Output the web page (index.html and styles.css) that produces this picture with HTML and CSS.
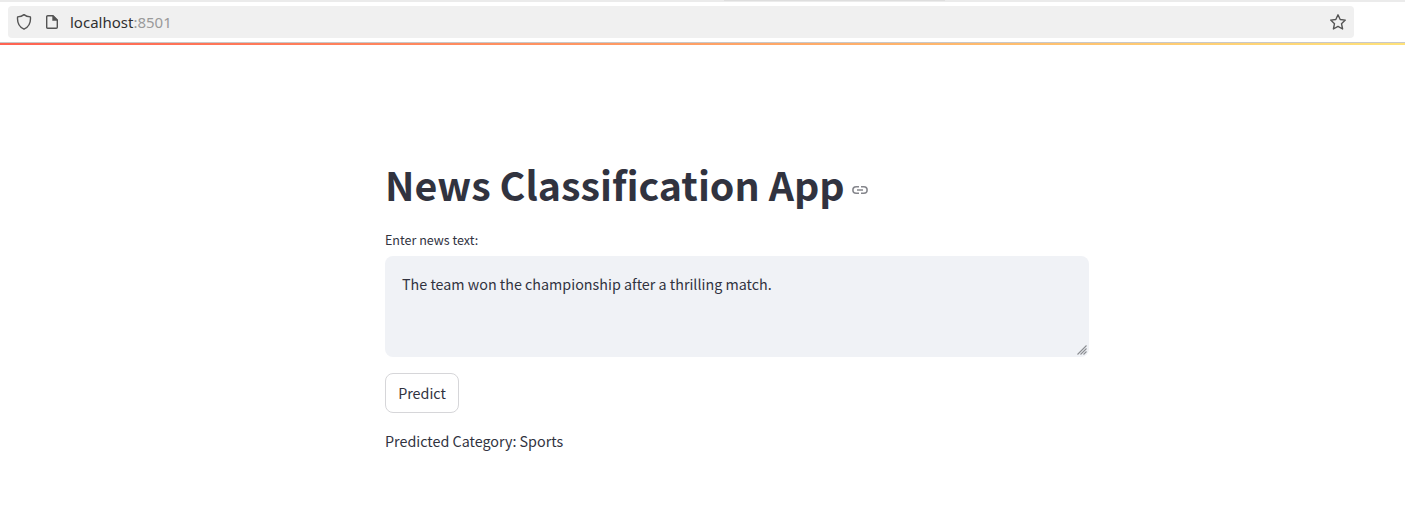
FILE: index.html
```html
<!DOCTYPE html>
<html lang="en">
<head>
<meta charset="utf-8">
<title>News Classification App</title>
<link rel="stylesheet" href="styles.css">
</head>
<body>
<header class="toolbar">
  <div class="tab-edge"></div>
  <div class="address">
    <svg class="shield" width="16" height="18" viewBox="0 0 16 18"><path d="M8 1.6C9.700 3 12 3.700 14.400 3.900C14.900 9 13.400 13.800 8 16.200C2.600 13.800 1.100 9 1.600 3.900C4 3.700 6.300 3 8 1.600Z"/></svg>
    <svg class="page-icon" width="14" height="16" viewBox="0 0 14 16"><path d="M2.700 1.700H8L12.300 6V13.300Q12.300 14.300 11.300 14.300H2.700Q1.700 14.300 1.700 13.300V2.700Q1.700 1.700 2.700 1.700Z"/><path class="fold" d="M7.300 1.500V6.700H12.500V5.700L8.400 1.500Z"/></svg>
    <span class="url">localhost<span class="port">:8501</span></span>
    <svg class="star" width="18" height="18" viewBox="0 0 18 18"><path d="M9 1.800L11.200 6.500L16.300 7.100L12.500 10.700L13.600 16L9 13.400L4.400 16L5.500 10.700L1.700 7.100L6.800 6.500Z"/></svg>
  </div>
</header>
<div class="decoration"></div>
<main class="content">
  <h1 class="title"><span>News Classification App</span>
    <svg class="link" width="16" height="10" viewBox="0 0 16 10"><path d="M7 1.700H4.200A3.300 3.300 0 0 0 4.200 8.300H7M9 1.700H11.800A3.300 3.300 0 0 1 11.800 8.300H9M5 5H11"/></svg>
  </h1>
  <label class="label" for="news">Enter news text:</label>
  <div class="field">
    <textarea id="news" class="input" spellcheck="false">The team won the championship after a thrilling match.</textarea>
    <svg class="grip" width="10" height="10" viewBox="0 0 10 10"><path d="M.5 9.500L9.500 .5M3.500 9.500L9.500 3.500M6.500 9.500L9.500 6.500"/></svg>
  </div>
  <button class="predict">Predict</button>
  <p class="result">Predicted Category: Sports</p>
</main>
</body>
</html>
```
FILE: styles.css
```css
* { box-sizing: border-box; }
body {
  margin: 0;
  height: 532px;
  overflow: hidden;
  background: #fff;
  color: #31333f;
  font-family: "Noto Sans CJK SC", "Noto Sans", sans-serif;
}
.toolbar { height: 43px; border-bottom: 1px solid #c8c8c9; }
.tab-edge {
  height: 2px;
  background: linear-gradient(#dedede, #dedede) 724px 0 / 221px 1px no-repeat #ebebeb;
}
.address {
  display: flex;
  align-items: center;
  width: 1346px;
  height: 32px;
  margin: 4px 0 0 8px;
  padding: 0 7px 0 8px;
  border-radius: 4px;
  background: #f0f0f0;
}
svg { display: block; flex: none; fill: none; }
.shield, .page-icon, .star { stroke: #545454; stroke-width: 1.4; stroke-linejoin: round; }
.page-icon { margin-left: 13px; }
.page-icon .fold { fill: #545454; stroke: none; }
.star { margin-left: auto; }
.url {
  margin-left: 11px;
  font: 15px/20px "Noto Sans", sans-serif;
  color: #303030;
}
.port { color: #9a9a9a; }
.decoration { height: 2px; background: linear-gradient(90deg, #ff6352, #ffa166 50%, #ffe27a); }
.content { width: 704px; margin: 113px 0 0 385px; }
.title {
  display: flex;
  align-items: center;
  height: 52px;
  margin: 0;
  font-size: 39.36px;
  line-height: 52px;
  font-weight: 700;
  white-space: nowrap;
}
.link { margin: 12px 0 0 7px; stroke: #85868c; stroke-width: 1.6; }
.label { display: block; margin-top: 20px; height: 20px; font-size: 12.53px; line-height: 20px; }
.field { position: relative; height: 101px; margin-top: 6px; }
.input {
  display: block;
  width: 100%;
  height: 101px;
  padding: 16px 17px;
  border: 0;
  border-radius: 8px;
  outline: 0;
  resize: none;
  background: #f0f2f6;
  color: inherit;
  font: 14.32px/24px "Noto Sans CJK SC", sans-serif;
}
.grip { position: absolute; right: 2px; bottom: 2px; stroke: #8c8d92; stroke-width: 1.1; }
.predict {
  display: block;
  width: 74px;
  height: 40px;
  margin-top: 16px;
  padding: 0;
  border: 1px solid #d6d6d9;
  border-radius: 8px;
  background: #fff;
  color: inherit;
  font: 14.32px/24px "Noto Sans CJK SC", sans-serif;
}
.result { margin: 16px 0 0; font-size: 14.32px; line-height: 24px; }
```
